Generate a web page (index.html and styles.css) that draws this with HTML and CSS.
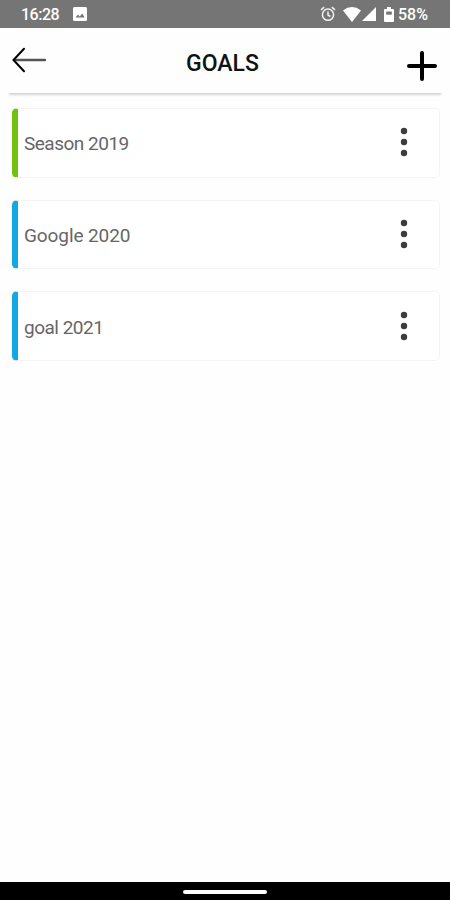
FILE: index.html
```html
<!DOCTYPE html>
<html lang="en">
  <head>
    <meta charset="UTF-8" />
    <meta name="viewport" content="width=device-width, initial-scale=1.0" />
    <title>Goals</title>
    <link rel="stylesheet" href="styles.css">
  </head>
  <body>
    <div class="status-bar">
      <span class="time">16:28</span>
      <svg class="picture-icon" width="14" height="14" viewBox="0 0 14 14">
        <rect width="14" height="14" rx="1.5" fill="#fff" />
        <path d="M2.5 10.5 5 7.5l1.7 2 2.5-3 2.5 4z" fill="#757575" />
      </svg>
      <svg class="alarm-icon" width="16" height="16" viewBox="0 0 16 16" fill="none" stroke="#f4f4f4" stroke-width="1.5">
        <circle cx="8" cy="8.7" r="5.6" />
        <path d="M8 5.5v3.5l2.4 1.5M1 3.8 4.2 1.2M15 3.8l-3.2-2.6" />
      </svg>
      <svg class="wifi-icon" width="18" height="15" viewBox="0 0 18 14" preserveAspectRatio="none" fill="#fff">
        <path d="M0 3.2Q9-3.2 18 3.2L9 14z" />
      </svg>
      <svg class="signal-icon" width="14" height="14" viewBox="0 0 14 14" fill="#fff">
        <path d="M14 0v14H0z" />
      </svg>
      <svg class="battery-icon" width="10" height="15" viewBox="0 0 10 15">
        <path d="M3 0h4v2h2q1 0 1 1v11q0 1-1 1H1q-1 0-1-1V3q0-1 1-1h2z" fill="#fff" />
        <path d="M2.2 4.5h5.6v3.2H2.2z" fill="#757575" />
      </svg>
      <span class="percent">58%</span>
    </div>
    <header class="header">
      <svg class="back" width="36" height="26" viewBox="0 0 36 26" fill="none" stroke-linecap="round">
        <path d="M2 13h31" stroke="#555" stroke-width="2.4" />
        <path d="M12 1.8 1.5 13 12 24.2" stroke="#000" stroke-width="2" />
      </svg>
      <h1 class="title">GOALS</h1>
      <svg class="add" width="30" height="30" viewBox="0 0 30 30" stroke="#000" stroke-width="4" stroke-linecap="round">
        <path d="M15 2v26M2 15h26" />
      </svg>
    </header>
    <main class="goals">
      <div class="goal green">
        <span class="name season">Season 2019</span>
        <svg class="dots" width="8" height="32" viewBox="0 0 8 32">
          <circle cx="4" cy="5" r="3.2" /><circle cx="4" cy="16" r="3.2" /><circle cx="4" cy="27" r="3.2" />
        </svg>
      </div>
      <div class="goal blue">
        <span class="name google">Google 2020</span>
        <svg class="dots" width="8" height="32" viewBox="0 0 8 32">
          <circle cx="4" cy="5" r="3.2" /><circle cx="4" cy="16" r="3.2" /><circle cx="4" cy="27" r="3.2" />
        </svg>
      </div>
      <div class="goal blue">
        <span class="name">goal 2021</span>
        <svg class="dots" width="8" height="32" viewBox="0 0 8 32">
          <circle cx="4" cy="5" r="3.2" /><circle cx="4" cy="16" r="3.2" /><circle cx="4" cy="27" r="3.2" />
        </svg>
      </div>
    </main>
    <footer class="nav-bar">
      <div class="handle"></div>
    </footer>
  </body>
</html>
```
FILE: styles.css
```css
body {
  margin: 0;
  display: flex;
  flex-direction: column;
  height: 100vh;
  background-color: #fefefe;
  font-family: Roboto, "Liberation Sans", sans-serif;
}
.status-bar {
  display: flex;
  align-items: center;
  box-sizing: border-box;
  height: 28px;
  padding: 0 21px 0 21px;
  background-color: #757575;
  color: #fff;
  font-size: 16px;
  font-weight: 500;
}
.time {
  width: 52px;
  letter-spacing: -0.5px;
}
.alarm-icon {
  margin-left: auto;
}
.wifi-icon {
  margin-left: 7px;
}
.signal-icon {
  margin-left: 1px;
}
.battery-icon {
  margin: 0 4px 0 8px;
}
.percent {
  width: 31px;
}
.header {
  display: flex;
  box-sizing: border-box;
  height: 65px;
  margin: 0 7px;
  padding: 19px 6px 0 5px;
  box-shadow: 0 4px 2px -2px #d4d4d4;
}
.title {
  flex: 1;
  margin: 3px 0 0 138px;
  font-size: 23px;
  line-height: 28px;
  font-weight: 500;
  color: #111;
}
.add {
  margin-top: 4px;
}
.goals {
  flex: 1;
  display: flex;
  flex-direction: column;
  gap: 22px;
  padding: 15px 10px 0 12px;
}
.goal {
  display: flex;
  align-items: center;
  justify-content: space-between;
  box-sizing: border-box;
  height: 69.7px;
  padding: 0 31px 0 6px;
  border: 1px solid #f4f4f4;
  border-left: 6px solid;
  border-radius: 5px;
  background-color: #fff;
}
.green {
  border-left-color: #73c10d;
}
.blue {
  border-left-color: #12a9e2;
}
.name {
  margin-top: 2px;
  font-size: 19px;
  letter-spacing: -0.5px;
  color: #666;
}
.season {
  letter-spacing: -0.5px;
}
.google {
  letter-spacing: -0.1px;
}
.dots {
  margin-bottom: 1px;
  fill: #3c3c3c;
}
.nav-bar {
  display: flex;
  justify-content: center;
  align-items: center;
  height: 18px;
  background-color: #000;
}
.handle {
  width: 84px;
  height: 4px;
  margin-top: 2px;
  border-radius: 2px;
  background-color: #fff;
}
```
